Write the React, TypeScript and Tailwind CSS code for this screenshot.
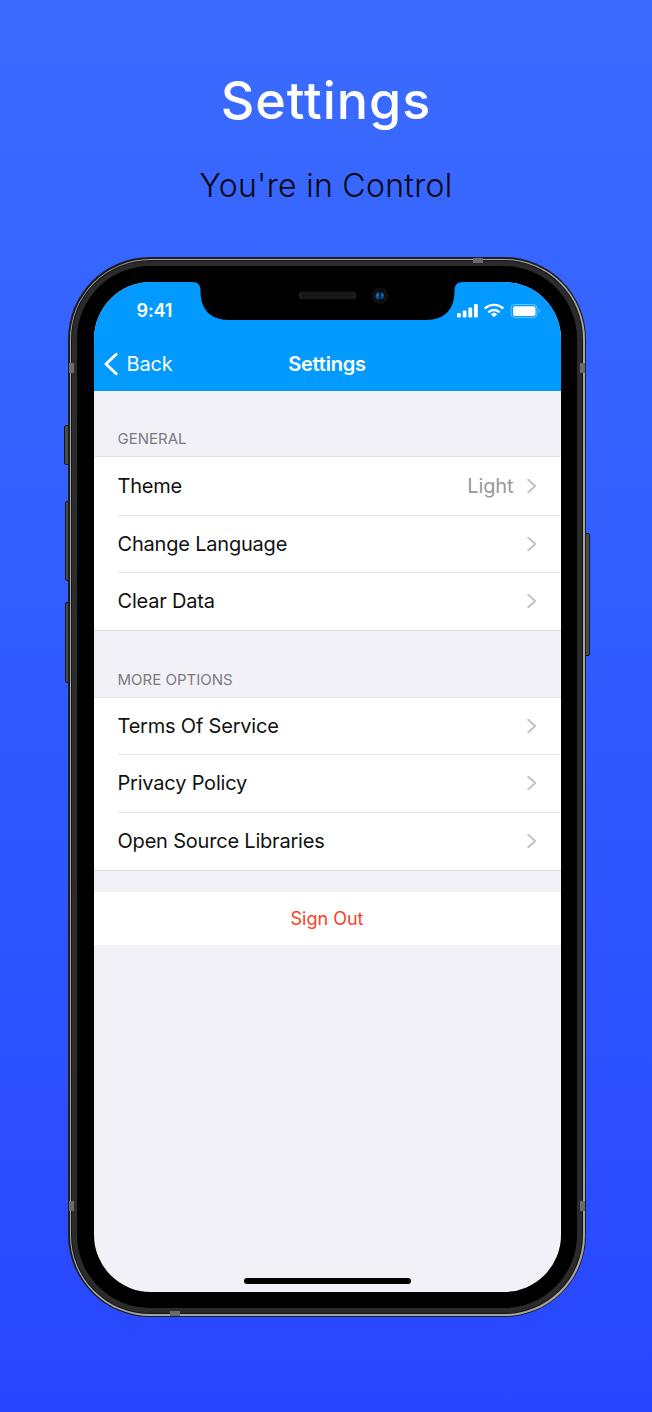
import React from "react";

function Chevron() {
  return (
    <svg className="h-[16px] w-[10px] shrink-0" viewBox="0 0 10 16" fill="none">
      <path d="M1.3 1.8 8.2 8 1.3 14.2" stroke="#c4c4c7" strokeWidth="2.1" strokeLinecap="round" strokeLinejoin="round" />
    </svg>
  );
}

type RowProps = { label: string; value?: string; last?: boolean; height: string; tracking: string };

function Row({ label, value, last, height, tracking }: RowProps) {
  return (
    <div className={`flex items-stretch bg-white pl-[24px] ${height}`}>
      <div className={`flex flex-1 items-center pr-[24px] ${last ? "" : "border-b border-[#e6e6e8]"}`}>
        <span className={`flex-1 text-[20px] leading-6 text-[#111] ${tracking}`}>{label}</span>
        {value && <span className="mr-[13px] text-[20px] leading-6 tracking-[-0.1px] text-[#98989d]">{value}</span>}
        <Chevron />
      </div>
    </div>
  );
}

function Notch() {
  return (
    <svg className="absolute left-0 top-0 h-[40px] w-[467px]" viewBox="0 0 467 40">
      <path d="M98 -1V0C104 0 106.500 3 106.500 9C106.500 27 116 38 135 38H332C351 38 360.500 27 360.500 9C360.500 3 363 0 369 0V-1Z" fill="#000" />
      <rect x="204.500" y="9.500" width="58" height="8" rx="4" fill="#151515" />
      <path d="M207.500 10.500a4 4 0 0 0 0 6M259.500 10.500a4 4 0 0 1 0 6" stroke="#383838" strokeWidth=".7" fill="none" />
      <path d="M208 12H259M208 15H259" stroke="#252525" strokeWidth="1" strokeDasharray="1 1" />
      <circle cx="286" cy="13.700" r="8.300" fill="#101010" />
      <circle cx="286" cy="13.700" r="5.500" fill="#020b17" />
      <path d="M285 9.700a4.200 4.200 0 0 0-1 8c1 0 1.500-1 1.500-2.500ZM287 9.700a4.200 4.200 0 0 1 1 7.500c-1 0-1.500-1-1.500-2Z" fill="#0d4f91" />
      <circle cx="283.700" cy="13" r="1.300" fill="#1873c4" />
      <circle cx="288.500" cy="12.700" r="1" fill="#1873c4" />
    </svg>
  );
}

function StatusIcons() {
  return (
    <svg className="h-[16px] w-[86px]" viewBox="0 0 86 16">
      <g fill="#fff">
        <rect x="1" y="10" width="3.800" height="4.500" rx="1" />
        <rect x="6.700" y="7.500" width="3.800" height="7" rx="1" />
        <rect x="12.400" y="4.500" width="3.800" height="10" rx="1" />
        <rect x="18" y="1" width="3.800" height="13.500" rx="1" />
      </g>
      <g fill="none" stroke="#fff" strokeWidth="2.400">
        <path d="M28.800 5.700a13 13 0 0 1 18.400 0" />
        <path d="M32.300 9.300a8.100 8.100 0 0 1 11.400 0" />
      </g>
      <path d="M38 14.200 34.900 11.200a4.600 4.600 0 0 1 6.200 0Z" fill="#fff" />
      <rect x="55" y="1.500" width="26" height="13" rx="3.800" fill="none" stroke="#fff" strokeOpacity=".4" />
      <rect x="57" y="3.200" width="22.500" height="9.800" rx="2" fill="#fff" />
      <path d="M82.700 5.800v4.400a2.400 2.400 0 0 0 0-4.400Z" fill="#fff" fillOpacity=".4" />
    </svg>
  );
}

function Screen() {
  return (
    <div className="relative flex h-[1010px] w-[467px] flex-col overflow-hidden rounded-[57px] bg-[#f2f1f7]">
      <header className="flex h-[108.500px] shrink-0 flex-col bg-[#029aff] text-white">
        <div className="flex h-[58px] items-center justify-between pl-[43px] pr-[19px]">
          <span className="text-[18px] font-semibold leading-5 tracking-[-0.1px]">9:41</span>
          <StatusIcons />
        </div>
        <div className="grid h-[48px] grid-cols-[1fr_auto_1fr] items-center pl-[10px] pr-[10px]">
          <div className="flex items-center gap-[9px]">
            <svg className="h-[24px] w-[14px]" viewBox="0 0 14 24" fill="none">
              <path d="M12.200 2.200 2 12l10.200 9.800" stroke="#fff" strokeWidth="2.900" strokeLinecap="round" strokeLinejoin="round" />
            </svg>
            <span className="text-[20px] leading-6 tracking-[-0.2px]">Back</span>
          </div>
          <span className="text-[20px] font-semibold leading-6 tracking-[-0.2px]">Settings</span>
        </div>
      </header>
      <Notch />

      <h2 className="flex h-[66px] shrink-0 items-end border-b border-[#e1e1e5] pb-[7px] pl-[24px] text-[15px] leading-5 text-[#7b7b80]">GENERAL</h2>
      <section className="flex shrink-0 flex-col border-b border-[#dcdce0]">
        <Row label="Theme" value="Light" height="h-[59px]" tracking="tracking-[-0.2px]" />
        <Row label="Change Language" height="h-[57px]" tracking="tracking-[-0.2px]" />
        <Row label="Clear Data" last height="h-[57px]" tracking="tracking-[-0.2px]" />
      </section>
      <h2 className="flex h-[67.500px] shrink-0 items-end border-b border-[#e1e1e5] pb-[7px] pl-[24px] text-[15px] leading-5 text-[#7b7b80]">MORE OPTIONS</h2>
      <section className="flex shrink-0 flex-col border-b border-[#dcdce0]">
        <Row label="Terms Of Service" height="h-[57px]" tracking="tracking-[-0.2px]" />
        <Row label="Privacy Policy" height="h-[57.500px]" tracking="tracking-[-0.2px]" />
        <Row label="Open Source Libraries" last height="h-[57.500px]" tracking="tracking-[-0.2px]" />
      </section>
      <div className="mt-[21px] flex h-[53px] shrink-0 items-center justify-center bg-white text-[18px] leading-6 text-[#fb4126]">Sign Out</div>
      <div className="mb-[8px] mt-auto h-[6px] w-[167px] shrink-0 self-center rounded-full bg-black" />
    </div>
  );
}

const sideButton = "absolute w-[5px] border border-[#151515] bg-[#4a4b4d]";
const band = "absolute bg-[#6a6a6a]";

function Phone() {
  return (
    <div className="relative mt-[257px] h-[1060px] w-[518px] font-['Inter',sans-serif]">
      <div className={`${sideButton} -left-[4px] top-[168px] h-[40px] rounded-l-[2px]`} />
      <div className={`${sideButton} -left-[3px] top-[244px] h-[80px] rounded-l-[2px]`} />
      <div className={`${sideButton} -left-[3px] top-[345px] h-[81px] rounded-l-[2px]`} />
      <div className={`${sideButton} -right-[3.500px] top-[276px] h-[123px] rounded-r-[2px]`} />
      <div className="relative h-full w-full rounded-[82px] bg-[#1d1d20] p-[1.500px]">
        <div className="h-full w-full rounded-[80.500px] bg-[#a5a5a3] p-[1.500px]">
          <div className="h-full w-full rounded-[79px] bg-[#141414] p-[1px]">
            <div className="h-full w-full rounded-[78px] bg-[#2b2b2b] p-[5px]">
              <div className="flex h-full w-full items-center justify-center rounded-[73px] bg-black">
                <Screen />
              </div>
            </div>
          </div>
        </div>
      </div>
      <div className={`${band} left-[1px] top-[106px] h-[10px] w-[5px]`} />
      <div className={`${band} right-[1px] top-[106px] h-[10px] w-[5px]`} />
      <div className={`${band} left-[1px] top-[944px] h-[10px] w-[5px]`} />
      <div className={`${band} right-[1px] top-[944px] h-[10px] w-[5px]`} />
      <div className={`${band} left-[405px] top-[1px] h-[5px] w-[10px]`} />
      <div className={`${band} bottom-[1px] left-[102px] h-[5px] w-[10px]`} />
    </div>
  );
}

export default function App() {
  return (
    <main className="flex h-[1412px] w-[652px] flex-col items-center overflow-hidden bg-linear-to-b from-[#3b6bff] to-[#2846ff]">
      <div className="-mb-[257px] flex h-[257px] shrink-0 flex-col items-center whitespace-nowrap pt-[71px]">
        <h1 className="font-['Inter',sans-serif] text-[52px] font-medium leading-[60px] tracking-[1px] text-white">Settings</h1>
        <p className="mt-[35px] font-['Inter',sans-serif] text-[32px] font-light leading-[40px] tracking-[0.3px] text-[#05060c]">You're in Control</p>
      </div>
      <div className="flex shrink-0 pl-[2px]">
        <Phone />
      </div>
    </main>
  );
}
